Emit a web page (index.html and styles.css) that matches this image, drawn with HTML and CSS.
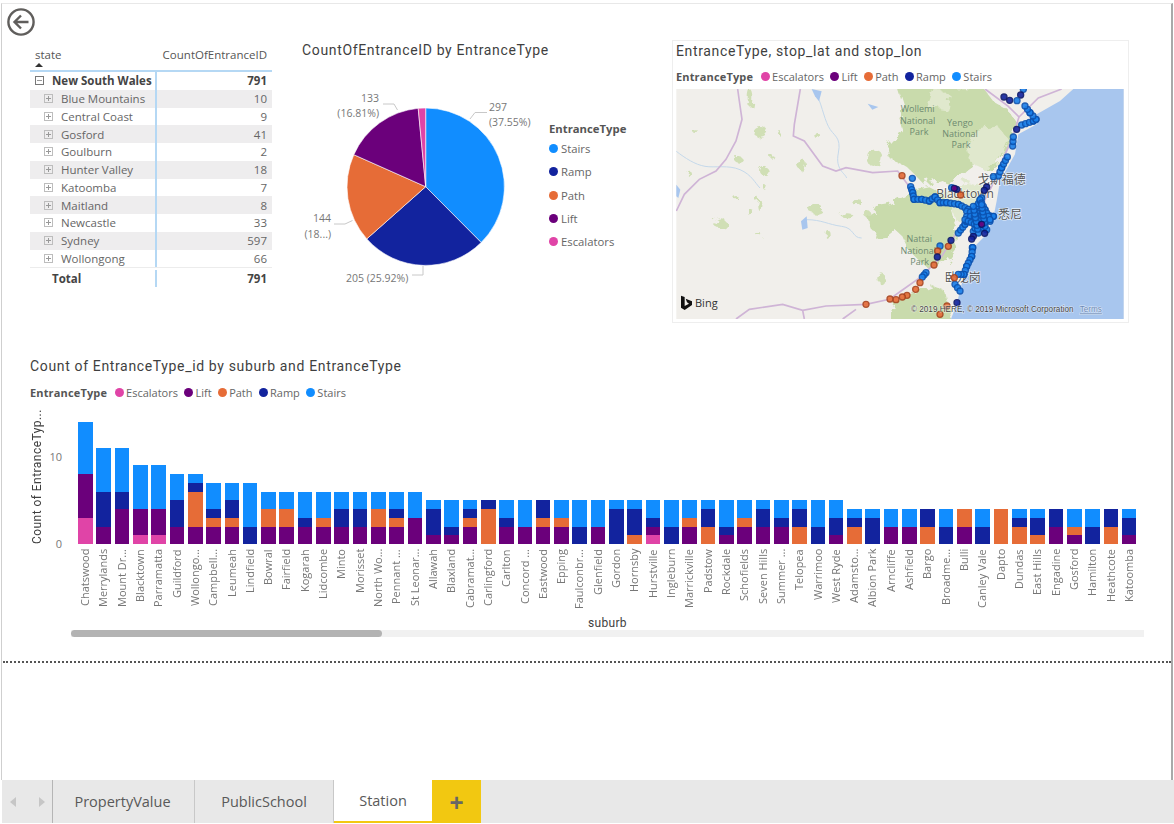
FILE: index.html
```html
<!DOCTYPE html>
<html lang="en">
<head>
    <meta charset="UTF-8">
    <title>Station</title>
    <link rel="stylesheet" href="styles.css">
</head>
<body>
    <div class="page">
        <main class="canvas">
            <svg class="back" viewBox="0 0 28 28" aria-label="Back">
                <circle cx="14" cy="14" r="12.6"/>
                <path d="M21.5 14H7.5M14 7.5 7.5 14 14 20.5"/>
            </svg>

            <div class="top-row">
                <section class="matrix">
                    <div class="matrix-head">
                        <div class="col-name"><span>state</span><i class="sort"></i></div>
                        <div class="col-val">CountOfEntranceID</div>
                    </div>
                    <div class="row root"><div class="col-name"><i class="box minus"></i>New South Wales</div><div class="col-val">791</div></div>
                    <div class="row odd"><div class="col-name"><i class="box"></i>Blue Mountains</div><div class="col-val">10</div></div>
                    <div class="row"><div class="col-name"><i class="box"></i>Central Coast</div><div class="col-val">9</div></div>
                    <div class="row odd"><div class="col-name"><i class="box"></i>Gosford</div><div class="col-val">41</div></div>
                    <div class="row"><div class="col-name"><i class="box"></i>Goulburn</div><div class="col-val">2</div></div>
                    <div class="row odd"><div class="col-name"><i class="box"></i>Hunter Valley</div><div class="col-val">18</div></div>
                    <div class="row"><div class="col-name"><i class="box"></i>Katoomba</div><div class="col-val">7</div></div>
                    <div class="row odd"><div class="col-name"><i class="box"></i>Maitland</div><div class="col-val">8</div></div>
                    <div class="row"><div class="col-name"><i class="box"></i>Newcastle</div><div class="col-val">33</div></div>
                    <div class="row odd"><div class="col-name"><i class="box"></i>Sydney</div><div class="col-val">597</div></div>
                    <div class="row"><div class="col-name"><i class="box"></i>Wollongong</div><div class="col-val">66</div></div>
                    <div class="row total"><div class="col-name">Total</div><div class="col-val">791</div></div>
                </section>

                <section class="pie-card">
                    <h2 class="title">CountOfEntranceID by EntranceType</h2>
                    <div class="pie-body">
                        <svg class="pie" viewBox="302 60 245 230">
                            <g id="pieSlices"></g>
                            <path class="leader" d="M470 119 475 112.5H487"/>
                            <path class="leader" d="M397.500 110 394 104H383"/>
                            <path class="leader" d="M352.500 220.500 345 224H334"/>
                            <path class="leader" d="M423 266V275H412"/>
                            <text class="pie-label" x="489" y="111">297</text>
                            <text class="pie-label" x="489" y="126">(37.55%)</text>
                            <text class="pie-label end" x="379" y="102">133</text>
                            <text class="pie-label end" x="379" y="117">(16.81%)</text>
                            <text class="pie-label end" x="331" y="222">144</text>
                            <text class="pie-label end" x="331" y="238">(18...)</text>
                            <text class="pie-label" x="346" y="282">205 (25.92%)</text>
                        </svg>
                        <div class="pie-legend">
                            <div class="pie-legend-title">EntranceType</div>
                            <div class="pie-legend-item"><i class="dot stairs"></i>Stairs</div>
                            <div class="pie-legend-item"><i class="dot ramp"></i>Ramp</div>
                            <div class="pie-legend-item"><i class="dot path"></i>Path</div>
                            <div class="pie-legend-item"><i class="dot lift"></i>Lift</div>
                            <div class="pie-legend-item"><i class="dot escalators"></i>Escalators</div>
                        </div>
                    </div>
                </section>

                <section class="map-card">
                    <h2 class="title">EntranceType, stop_lat and stop_lon</h2>
                    <div class="legend map-legend">
                        <b>EntranceType</b>
                        <span><i class="dot escalators"></i>Escalators</span>
                        <span><i class="dot lift"></i>Lift</span>
                        <span><i class="dot path"></i>Path</span>
                        <span><i class="dot ramp"></i>Ramp</span>
                        <span><i class="dot stairs"></i>Stairs</span>
                    </div>
                    <svg class="map" viewBox="34 178 1342 690">
                        <defs>
                            <filter id="rough" x="-5%" y="-5%" width="110%" height="110%">
                                <feTurbulence type="fractalNoise" baseFrequency="0.035" numOctaves="3" seed="7"/>
                                <feDisplacementMap in="SourceGraphic" scale="34"/>
                                <feGaussianBlur stdDeviation="2"/>
                            </filter>
                        </defs>
                        <rect class="land" x="34" y="178" width="1342" height="690"/>
                        <g class="rough">
                            <path class="park" d="M700 170 722 240 700 262 712 300 690 330 672 350 680 392 712 404 745 430 775 462 815 450 850 462 880 445 905 420 930 402 960 420 985 425 1010 385 1040 335 1060 285 1030 240 985 215 950 170Z"/>
                            <path class="park-pale" d="M935 300 1000 290 1030 330 1000 400 960 420 920 402 905 350Z"/>
                            <path class="park-pale" d="M800 170 860 200 850 240 780 230Z"/>
                            <path class="park" d="M604 560 628 545 640 525 672 520 700 505 752 478 790 470 830 490 860 530 875 590 870 640 880 660 850 700 790 715 760 690 730 660 712 620 690 600 660 625 636 630 620 590Z"/>
                            <path class="park" d="M675 880 690 810 745 790 800 770 840 785 862 880Z"/>
                            <path class="park-pale" d="M830 490 905 455 960 470 950 540 880 580 860 530Z"/>
                            <g id="mapSpots"></g>
                        </g>
                        <g class="soft">
                            <path class="water" d="M1225 178 1185 214 1115 254 1115 284 1060 314 1050 374 1005 454 995 514 985 564 965 614 925 654 910 704 890 764 875 824 858 868H1376V178Z"/>
                            <path class="river" d="M34 365C60 385 90 405 120 410S190 405 225 420 270 460 285 475"/>
                            <path class="river" d="M450 185C470 220 475 260 490 290S530 320 520 370 540 430 545 445"/>
                            <path class="river" d="M425 570C470 570 490 585 530 590S560 625 590 625"/>
                            <path class="lake" d="M440 178 470 185 462 215 450 200Z"/>
                            <path class="lake" d="M408 575 425 560 428 595 412 600Z"/>
                            <path class="lake" d="M608 222 640 232 622 240Z"/>
                            <path class="lake" d="M34 465 46 480 40 505 34 500Z"/>
                            <path class="road" d="M218 178 223 214 231 269 213 334 183 389 153 424 103 449 58 494 34 544"/>
                            <path class="road" d="M406 178 388 284 385 319 418 334 473 409 513 424 543 414 623 429 698 424 740 480"/>
                            <path class="road" d="M213 868 253 839 353 824 413 842 483 829 603 824 673 809 708 784 770 740 830 680 880 600 920 560"/>
                            <path class="road" d="M413 842 418 868M533 868 573 839"/>
                            <path class="road" d="M960 178 1030 230 1062 262 1040 330 1000 420 980 470 950 530"/>
                            <path class="road" d="M1190 178 1120 205 1062 262"/>
                        </g>
                        <g class="map-text park-name">
                            <text x="758" y="248">Wollemi</text>
                            <text x="758" y="282">National</text>
                            <text x="762" y="316">Park</text>
                            <text x="885" y="288">Yengo</text>
                            <text x="885" y="321">National</text>
                            <text x="888" y="354">Park</text>
                            <text x="763" y="638">Nattai</text>
                            <text x="760" y="672">National</text>
                            <text x="764" y="706">Park</text>
                        </g>
                        <g class="map-text city">
                            <text x="1010" y="463" lang="zh">戈斯福德</text>
                            <text x="900" y="505">Blacktown</text>
                            <text x="1035" y="568" lang="zh">悉尼</text>
                            <text x="893" y="758" lang="zh">卧龙岗</text>
                        </g>
                        <g id="mapDots"></g>
                        <path class="bing-logo" d="M48 798 59 802V829L72 822 66 818 62 807 81 815V826L59 841 48 834Z"/>
                        <text class="bing-text" x="90" y="833">Bing</text>
                        <text class="copyright" x="738" y="848">© 2019 HERE, © 2019 Microsoft Corporation</text>
                        <text class="copyright terms" x="1244" y="848">Terms</text>
                    </svg>
                </section>
            </div>

            <section class="bar-card">
                <h2 class="title">Count of EntranceType_id by suburb and EntranceType</h2>
                <div class="legend bar-legend">
                    <b>EntranceType</b>
                    <span><i class="dot escalators"></i>Escalators</span>
                    <span><i class="dot lift"></i>Lift</span>
                    <span><i class="dot path"></i>Path</span>
                    <span><i class="dot ramp"></i>Ramp</span>
                    <span><i class="dot stairs"></i>Stairs</span>
                </div>
                <div class="plot">
                    <div class="y-title">Count of EntranceTyp...</div>
                    <div class="y-ticks"><span>10</span><span>0</span></div>
                    <div class="bars" id="bars"></div>
                </div>
                <div class="x-title">suburb</div>
                <div class="scrollbar"><div class="thumb"></div></div>
            </section>

            <div class="page-end"></div>
        </main>

        <nav class="tabs">
            <div class="tab-arrows"><i class="arrow left"></i><i class="arrow right"></i></div>
            <div class="tab tab-property">PropertyValue</div>
            <div class="tab tab-school">PublicSchool</div>
            <div class="tab tab-station">Station</div>
            <div class="tab-add">+</div>
        </nav>
    </div>

    <script src="script.js"></script>
</body>
</html>
```

FILE: styles.css
```css
* {
    margin: 0;
    padding: 0;
    box-sizing: border-box;
}

body {
    font-family: "Open Sans", "Liberation Sans", sans-serif;
    background: #fff;
    color: #666;
}

i {
    display: block;
    font-style: normal;
}

.page {
    height: 823px;
    display: flex;
    flex-direction: column;
    padding-top: 3px;
    overflow: hidden;
}

.canvas {
    flex: 1;
    min-height: 0;
    margin-left: 1px;
    margin-right: 1px;
    border-top: 1px solid #e8e8e8;
    border-left: 1px solid #cfcfcf;
    border-right: 2px solid #a9a9a9;
}

.back {
    display: block;
    width: 28px;
    height: 28px;
    margin: 4px 0 0 5px;
    fill: none;
    stroke: #605e5c;
    stroke-width: 2.4;
}

.title {
    font-family: Roboto, sans-serif;
    font-size: 14px;
    font-weight: 400;
    line-height: 20px;
    letter-spacing: 0.65px;
    color: #3f3f3f;
    white-space: nowrap;
}

/* top row */
.top-row {
    display: flex;
    height: 283px;
    margin-top: 4px;
    padding-left: 28px;
}

.matrix {
    width: 242px;
    margin-top: 5px;
    font-size: 11.5px;
    color: #666;
}

.matrix-head {
    display: flex;
    height: 27px;
    border-bottom: 2px solid #b5d8f4;
    color: #555;
}

.matrix-head .col-name {
    position: relative;
    padding: 2px 0 0 5px;
    border-right-color: transparent;
}

.matrix-head .col-val {
    padding-top: 2px;
    font-size: 11.5px;
    white-space: nowrap;
}

.col-name {
    width: 127px;
    flex: none;
    border-right: 2px solid #b5d8f4;
    white-space: nowrap;
}

.col-val {
    flex: 1;
    text-align: right;
    padding-right: 5px;
}

.sort {
    position: absolute;
    left: 5px;
    bottom: 3px;
    border-left: 4px solid transparent;
    border-right: 4px solid transparent;
    border-bottom: 4px solid #333;
}

.row {
    display: flex;
    align-items: center;
    height: 17.75px;
}

.row .col-name {
    display: flex;
    align-items: center;
    height: 100%;
    padding-left: 14px;
}

.row.odd {
    background: #eeedee;
}

.box {
    position: relative;
    width: 9px;
    height: 9px;
    margin-right: 8px;
    border: 1px solid #bdbdbd;
}

.box::before,
.box::after {
    content: "";
    position: absolute;
    background: #999;
}

.box::before {
    left: 1px;
    right: 1px;
    top: 3px;
    height: 1px;
}

.box::after {
    top: 1px;
    bottom: 1px;
    left: 3px;
    width: 1px;
}

.root,
.total {
    font-weight: 700;
    color: #444;
}

.root .col-name {
    padding-left: 5px;
}

.box.minus {
    border-color: #777;
}

.box.minus::after {
    display: none;
}

.total {
    height: 20px;
    padding-top: 2px;
    border-top: 1px solid #ececec;
}

.total .col-name {
    padding-left: 22px;
}

/* pie */
.pie-card {
    width: 370px;
    margin-left: 30px;
}

.pie-body {
    display: flex;
}

.pie {
    display: block;
    width: 245px;
    height: 230px;
}

.leader {
    fill: none;
    stroke: #c8c8c8;
    stroke-width: 1;
}

.pie-label {
    font-size: 10.5px;
    fill: #777;
}

.pie-label.end {
    text-anchor: end;
}

.pie-legend {
    margin: 61px 0 0 2px;
    font-size: 11.3px;
    color: #666;
}

.pie-legend-title {
    height: 16px;
    line-height: 16px;
    font-weight: 700;
    color: #555;
}

.pie-legend-item {
    display: flex;
    align-items: center;
    gap: 3px;
    height: 23.25px;
}

.dot {
    flex: none;
    width: 9px;
    height: 9px;
    border-radius: 50%;
}

.stairs { background: #118dff; }
.ramp { background: #12239e; }
.path { background: #e66c37; }
.lift { background: #6b007b; }
.escalators { background: #e044a7; }

/* map */
.map-card {
    width: 457px;
    padding: 0 3px;
    border: 1px solid #eeeeee;
}

.legend {
    display: flex;
    align-items: center;
    height: 16px;
    font-size: 11px;
    color: #666;
}

.legend b {
    color: #555;
    margin-right: 8px;
    letter-spacing: 0.15px;
}

.legend span {
    display: flex;
    align-items: center;
    gap: 2px;
    margin-right: 6.5px;
}

.map-legend {
    margin-top: 7px;
}

.map {
    display: block;
    width: 448px;
    height: 230px;
    margin-top: 5px;
}

.land { fill: #f1efeb; }
.rough { filter: url(#rough); }
.soft { filter: blur(1px); }
.park { fill: #c9dbac; }
.park-pale { fill: #e0e8cd; }
.spot { fill: #d0dfb5; }
.water { fill: #a8c6ee; }
.lake { fill: #a8c6ee; }
.river { fill: none; stroke: #c4d8ea; stroke-width: 3; }
.road { fill: none; stroke: #cfb4d6; stroke-width: 5; }

.map-text text {
    text-anchor: middle;
    font-family: "Open Sans", "Noto Sans CJK SC", sans-serif;
}

.park-name text {
    font-size: 27px;
    fill: #6d8a70;
}

.city text {
    font-size: 36px;
    fill: #555;
    stroke: #fff;
    stroke-width: 4px;
    stroke-opacity: 0.7;
    paint-order: stroke;
}

.map-dot {
    stroke-width: 4;
    opacity: 0.9;
}

.bing-logo { fill: #111; }

.bing-text {
    font-size: 33px;
    fill: #333;
}

.copyright {
    font-family: "Liberation Sans", sans-serif;
    font-size: 24.5px;
    fill: #444;
    stroke: #fff;
    stroke-width: 3px;
    stroke-opacity: 0.6;
    paint-order: stroke;
}

.terms {
    text-decoration: underline;
    fill: #6f8bb5;
}

/* bar chart */
.bar-card {
    margin: 33px 0 0 28px;
}

.bar-legend {
    margin-top: 8px;
}

.plot {
    display: flex;
    margin-top: 9px;
}

.y-title {
    width: 14px;
    height: 135px;
    writing-mode: vertical-rl;
    transform: rotate(180deg);
    font-family: Roboto, sans-serif;
    font-size: 12px;
    line-height: 14px;
    letter-spacing: 0.45px;
    color: #3f3f3f;
    white-space: nowrap;
}

.y-ticks {
    display: flex;
    flex-direction: column;
    justify-content: flex-end;
    align-items: flex-end;
    gap: 73px;
    width: 18px;
    height: 142px;
    margin-right: 16px;
    font-size: 11px;
    line-height: 14px;
    color: #777;
}

.bars {
    display: flex;
    gap: 3.66px;
}

.bar-col {
    width: 14.67px;
}

.stack {
    display: flex;
    flex-direction: column-reverse;
    height: 135px;
}

.bar-label {
    height: 66px;
    margin-top: 5px;
    line-height: 14.67px;
    writing-mode: vertical-rl;
    transform: rotate(180deg);
    text-align: right;
    font-size: 11px;
    color: #777;
    white-space: nowrap;
}

.x-title {
    width: 1073px;
    margin-left: 41px;
    margin-top: 1px;
    font-family: Roboto, sans-serif;
    font-size: 12px;
    line-height: 14px;
    letter-spacing: 0.3px;
    text-align: center;
    color: #3f3f3f;
}

.scrollbar {
    width: 1073px;
    height: 7px;
    margin: 0 0 0 41px;
    background: #f1f1f1;
}

.thumb {
    width: 311px;
    height: 7px;
    border-radius: 4px;
    background: #b3b3b3;
}

.page-end {
    margin-top: 24px;
    margin-left: 1px;
    border-top: 2px dotted #555;
}

/* tabs */
.tabs {
    display: flex;
    flex: none;
    height: 43px;
    margin-left: 2px;
    background: #e8e8e8;
    font-size: 14.5px;
    color: #595959;
}

.tab-arrows {
    display: flex;
    align-items: center;
    justify-content: space-between;
    width: 51px;
    padding: 0 7px 0 8px;
    border-right: 1px solid #b5b5b5;
}

.arrow {
    border-top: 5px solid transparent;
    border-bottom: 5px solid transparent;
}

.arrow.left {
    border-right: 6px solid #c6c6c6;
}

.arrow.right {
    border-left: 6px solid #c6c6c6;
}

.tab {
    display: flex;
    align-items: center;
    justify-content: center;
    height: 100%;
    border-right: 1px solid #c8c8c8;
}

.tab-property {
    width: 142px;
    padding-right: 2px;
}

.tab-school {
    width: 139px;
}

.tab-station {
    width: 98px;
    border-right: 0;
    background: #fff;
    border-bottom: 2px solid #f2c811;
}

.tab-add {
    width: 49px;
    height: 100%;
    padding-top: 1px;
    background: #f2c811;
    color: #666;
    font-family: "Liberation Sans", sans-serif;
    font-size: 24px;
    font-weight: 700;
    line-height: 43px;
    text-align: center;
}
```

FILE: script.js
```js
const COLORS = { E: '#e044a7', L: '#6b007b', P: '#e66c37', R: '#12239e', S: '#1a80ea' };
const BAR_COLORS = { ...COLORS, S: '#118dff' };
const UNIT = 8.74;

// bottom to top, same order as the legend
const suburbs = [
    ['Chatswood', 'E3 L5 S6'], ['Merrylands', 'L2 R4 S5'], ['Mount Dr...', 'L4 R2 S5'],
    ['Blacktown', 'E1 L3 S5'], ['Parramatta', 'E1 L3 S5'], ['Guildford', 'L2 R3 S3'],
    ['Wollongo...', 'L2 P4 R1 S1'], ['Campbell...', 'L2 P1 R1 S3'], ['Leumeah', 'L2 P1 R2 S2'],
    ['Lindfield', 'R2 S5'], ['Bowral', 'L2 P2 S2'], ['Fairfield', 'L2 P2 S2'],
    ['Kogarah', 'L2 R1 S3'], ['Lidcombe', 'L2 P1 S3'], ['Minto', 'L2 R2 S2'],
    ['Morisset', 'L2 R2 S2'], ['North Wo...', 'L2 P2 S2'], ['Pennant ...', 'L2 P1 R1 S2'],
    ['St Leonar...', 'L3 S3'], ['Allawah', 'L1 R3 S1'], ['Blaxland', 'L1 R1 S3'],
    ['Cabramat...', 'L2 P1 R1 S1'], ['Carlingford', 'P4 R1'], ['Carlton', 'L2 R1 S2'],
    ['Concord ...', 'L2 S3'], ['Eastwood', 'L2 P1 R2'], ['Epping', 'L2 P1 S2'],
    ['Faulconbr...', 'R2 S3'], ['Glenfield', 'L2 S3'], ['Gordon', 'R4 S1'],
    ['Hornsby', 'P1 R3 S1'], ['Hurstville', 'E1 L1 R1 S2'], ['Ingleburn', 'R2 S3'],
    ['Marrickville', 'L2 P1 S2'], ['Padstow', 'P2 R2 S1'], ['Rockdale', 'L1 R1 S3'],
    ['Schofields', 'L2 P1 S2'], ['Seven Hills', 'L2 R2 S1'], ['Summer ...', 'L2 R1 S2'],
    ['Telopea', 'P2 R2 S1'], ['Warrimoo', 'R2 S3'], ['West Ryde', 'L1 R2 S2'],
    ['Adamsto...', 'P2 R1 S1'], ['Albion Park', 'R3 S1'], ['Arncliffe', 'L2 S2'],
    ['Ashfield', 'L2 S2'], ['Bargo', 'P2 R2'], ['Broadme...', 'R2 S2'],
    ['Bulli', 'L2 P2'], ['Canley Vale', 'R2 S2'], ['Dapto', 'P4'],
    ['Dundas', 'P2 R1 S1'], ['East Hills', 'P1 R2 S1'], ['Engadine', 'L2 R2'],
    ['Gosford', 'L1 P1 S2'], ['Hamilton', 'R2 S2'], ['Heathcote', 'P2 R2'],
    ['Katoomba', 'L1 R2 S1'],
];

const bars = document.getElementById('bars');
suburbs.forEach(([name, parts]) => {
    const segments = parts.split(' ').map((p) =>
        `<div style="height:${(+p.slice(1) * UNIT).toFixed(2)}px;background:${BAR_COLORS[p[0]]}"></div>`
    ).join('');
    bars.innerHTML += `
        <div class="bar-col">
            <div class="stack">${segments}</div>
            <div class="bar-label">${name}</div>
        </div>
    `;
});

// pie, clockwise from 12 o'clock
const slices = [[297, 'S'], [205, 'R'], [144, 'P'], [133, 'L'], [12, 'E']];
const CX = 425.7, CY = 186.7, RADIUS = 78.7;
let angle = 0;
let pieHtml = '';
slices.forEach(([value, key]) => {
    const next = angle + value / 791 * Math.PI * 2;
    const x1 = CX + RADIUS * Math.sin(angle), y1 = CY - RADIUS * Math.cos(angle);
    const x2 = CX + RADIUS * Math.sin(next), y2 = CY - RADIUS * Math.cos(next);
    const large = next - angle > Math.PI ? 1 : 0;
    pieHtml += `<path d="M${CX} ${CY}L${x1} ${y1}A${RADIUS} ${RADIUS} 0 ${large} 1 ${x2} ${y2}Z" fill="${BAR_COLORS[key]}" stroke="#fff" stroke-width="0.6"/>`;
    angle = next;
});
document.getElementById('pieSlices').innerHTML = pieHtml;

// small green patches on the map: x, y, rx, ry
const spots = [
    [255, 205, 7, 26], [285, 305, 22, 16], [95, 309, 9, 4], [223, 392, 13, 7], [298, 424, 13, 13],
    [411, 406, 12, 17], [73, 432, 5, 9], [213, 504, 8, 5], [283, 525, 6, 16], [255, 546, 6, 11],
    [165, 579, 20, 16], [281, 614, 8, 4], [453, 539, 22, 13], [543, 554, 19, 6], [578, 519, 13, 10],
    [488, 614, 6, 13], [628, 384, 22, 28], [608, 554, 8, 12], [651, 749, 11, 18], [458, 319, 7, 9],
    [348, 314, 6, 6], [318, 379, 6, 5], [296, 470, 5, 7],
];
document.getElementById('mapSpots').innerHTML = spots.map(([x, y, rx, ry]) =>
    `<ellipse class="spot" cx="${x}" cy="${y}" rx="${rx}" ry="${ry}"/>`
).join('');

// station dots, in map units. runs get filled in with a dot every few units
const runs = [
    [[737, 471], [743, 489], [747, 509], [770, 509], [793, 514], [810, 502], [825, 519], [845, 519], [880, 524], [910, 539], [935, 549]],
    [[880, 610], [900, 584], [915, 560], [935, 530], [950, 505]],
    [[905, 545], [985, 560]], [[905, 560], [985, 560]], [[905, 575], [975, 575]], [[925, 605], [960, 540]],
    [[945, 510], [975, 570]], [[900, 570], [965, 600]], [[940, 610], [925, 530]], [[960, 590], [950, 525]],
    [[1000, 439], [1010, 414], [1027, 382]],
    [[1043, 349], [1045, 322]],
    [[1070, 286], [1105, 274], [1113, 269], [1095, 249], [1080, 229]],
    [[922, 654], [923, 654], [920, 680], [905, 710], [897, 734], [880, 734]],
    [[870, 764], [885, 784]], [[783, 729], [772, 742]],
];
const singles = [
    [742, 446, 'S'], [860, 474, 'S'], [825, 649, 'S'], [1075, 179, 'S'], [985, 441, 'S'],
    [711, 438, 'P'], [850, 650, 'P'], [818, 664, 'P'], [807, 706, 'P'], [765, 759, 'P'], [752, 779, 'P'],
    [726, 797, 'P'], [712, 802, 'P'], [693, 810, 'P'], [675, 808, 'P'], [603, 824, 'P'], [868, 744, 'P'],
    [846, 829, 'P'], [825, 854, 'P'], [887, 496, 'P'],
    [1017, 202, 'R'], [1034, 212, 'R'], [1055, 299, 'R'], [965, 472, 'R'], [958, 482, 'R'], [875, 479, 'R'],
    [817, 682, 'R'], [858, 632, 'R'], [925, 620, 'R'], [920, 628, 'R'], [876, 819, 'R'], [1067, 196, 'R'],
    [1056, 213, 'S'], [950, 584, 'L'], [868, 476, 'L'], [959, 611, 'R'],
];
let dots = '';
function addDot(x, y, key) {
    const stroke = key === 'S' ? '#0b52b0' : key === 'P' ? '#a8431d' : '#0b1668';
    dots += `<circle class="map-dot" cx="${x.toFixed(1)}" cy="${y.toFixed(1)}" r="9" fill="${COLORS[key]}" stroke="${stroke}"/>`;
}
runs.forEach((points) => {
    for (let i = 0; i < points.length - 1; i++) {
        const [x1, y1] = points[i], [x2, y2] = points[i + 1];
        const steps = Math.max(1, Math.round(Math.hypot(x2 - x1, y2 - y1) / 11));
        for (let s = 0; s <= steps; s++) {
            addDot(x1 + (x2 - x1) * s / steps, y1 + (y2 - y1) * s / steps, 'S');
        }
    }
});
singles.forEach(([x, y, key]) => addDot(x, y, key));
document.getElementById('mapDots').innerHTML = dots;
```
